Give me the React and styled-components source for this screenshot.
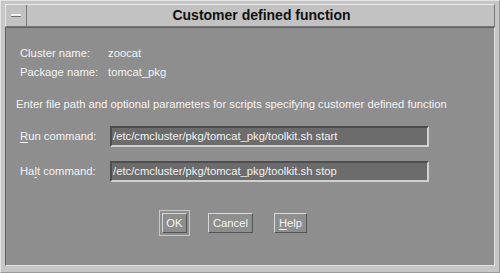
import React from 'react';
import styled, { createGlobalStyle } from 'styled-components';

const Global = createGlobalStyle`
  html, body {
    margin: 0;
    padding: 0;
    background: #c6c6c6;
  }
  body {
    font-family: "Liberation Sans", Arial, sans-serif;
  }
`;

const Frame = styled.div`
  width: 500px;
  height: 273px;
  box-sizing: border-box;
  background: #c6c6c6;
  border: 1px solid #9a9a9a;
  border-top-color: #e4e4e4;
  border-left-color: #e4e4e4;
  padding: 3px 4px 6px 4px;
  display: flex;
  flex-direction: column;
`;

const TitleBar = styled.div`
  height: 21px;
  display: flex;
  border: 1px solid #777;
  border-top-color: #e8e8e8;
  border-left-color: #e8e8e8;
  background: #c2c2c2;
`;

const MenuButton = styled.div`
  width: 20px;
  border-right: 1px solid #777;
  display: flex;
  align-items: center;
  justify-content: center;
  &::after {
    content: '';
    width: 10px;
    height: 2px;
    background: #f2f2f2;
    border-bottom: 1px solid #707070;
  }
`;

const Title = styled.div`
  flex: 1;
  text-align: center;
  font-weight: bold;
  font-size: 14px;
  line-height: 21px;
  color: #111;
  padding-left: 2px;
`;

const Body = styled.div`
  flex: 1;
  background: #8e8e8e;
  border: 1px solid #606060;
  border-right-color: #e2e2e2;
  border-bottom-color: #e2e2e2;
  padding: 14px 0 0 10px;
  color: #f4f4f4;
  font-size: 11.25px;
`;

const InfoGrid = styled.div`
  display: grid;
  grid-template-columns: 88px auto;
  row-gap: 6px;
  padding-left: 4px;
  line-height: 13px;
  margin-top: 5px;
`;

const Hint = styled.div`
  margin-top: 19px;
  line-height: 13px;
`;

const CmdRow = styled.div`
  display: flex;
  align-items: center;
  padding-left: 4px;
  margin-top: ${(p) => p.$top}px;
`;

const CmdLabel = styled.div`
  width: 90px;
  line-height: 13px;
`;

const Mnemonic = styled.span`
  text-decoration: underline;
  text-underline-offset: 2px;
`;

const Field = styled.div`
  width: 314px;
  height: 17px;
  box-sizing: content-box;
  background: #6c6c6c;
  border: 2px solid #4e4e4e;
  border-right-color: #d0d0d0;
  border-bottom-color: #d0d0d0;
  color: #f2f2f2;
  line-height: 17px;
  padding-left: 1px;
  white-space: nowrap;
  overflow: hidden;
`;

const Buttons = styled.div`
  display: flex;
  align-items: center;
  margin-top: 28px;
  padding-left: 143px;
`;

const DefaultRing = styled.div`
  border: 1px solid #c8c8c8;
  padding: 2px;
  margin-right: 18px;
  display: flex;
`;

const Button = styled.div`
  width: ${(p) => p.$w}px;
  box-sizing: border-box;
  height: 20px;
  line-height: 18px;
  text-align: center;
  border: 1px solid #d8d8d8;
  border-right-color: #555;
  border-bottom-color: #555;
  color: #f4f4f4;
  font-size: 11.25px;
  margin-right: ${(p) => p.$gap || 0}px;
`;

export default function App() {
  return (
    <>
      <Global />
      <Frame>
        <TitleBar>
          <MenuButton />
          <Title>Customer defined function</Title>
        </TitleBar>
        <Body>
          <InfoGrid>
            <span>Cluster name:</span>
            <span>zoocat</span>
            <span>Package name:</span>
            <span>tomcat_pkg</span>
          </InfoGrid>
          <Hint>Enter file path and optional parameters for scripts specifying customer defined function</Hint>
          <CmdRow $top={15}>
            <CmdLabel><Mnemonic>R</Mnemonic>un command:</CmdLabel>
            <Field>/etc/cmcluster/pkg/tomcat_pkg/toolkit.sh start</Field>
          </CmdRow>
          <CmdRow $top={14}>
            <CmdLabel>Ha<Mnemonic>l</Mnemonic>t command:</CmdLabel>
            <Field>/etc/cmcluster/pkg/tomcat_pkg/toolkit.sh stop</Field>
          </CmdRow>
          <Buttons>
            <DefaultRing>
              <Button $w={25}>OK</Button>
            </DefaultRing>
            <Button $w={45} $gap={21}>Cancel</Button>
            <Button $w={33}><Mnemonic>H</Mnemonic>elp</Button>
          </Buttons>
        </Body>
      </Frame>
    </>
  );
}
